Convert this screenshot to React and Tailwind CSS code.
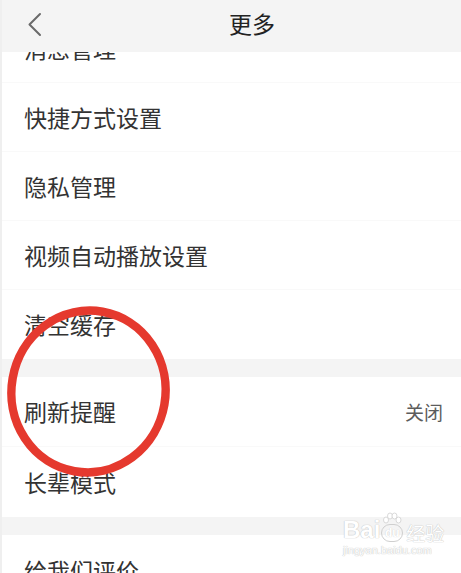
import React from "react";

const font = { fontFamily: '"Noto Sans CJK SC", "Noto Sans", sans-serif' };

function Row({ label, right, h = "h-[69px]", border = true }) {
  return (
    <div className={`${h} flex items-center justify-between pl-[22px] pr-[18px] ${border ? "border-b border-[#f9f9f9]" : ""}`}>
      <span className="text-[23px] leading-none text-[#333333]">{label}</span>
      {right && <span className="text-[19px] leading-none text-[#5c5c5c]">{right}</span>}
    </div>
  );
}

export default function App() {
  return (
    <div className="relative w-[461px] h-[573px] overflow-hidden bg-white border-l-2 border-[#efefef]" style={font}>
      <div className="relative z-10 h-[52px] flex items-center bg-[#f4f4f4]">
        <svg width="16" height="26" viewBox="0 0 16 26" className="ml-[25px] mt-[-2px]" fill="none">
          <path d="M13 2 L2.5 12.5 L13 23" stroke="#6a6a6a" strokeWidth="2" strokeLinecap="round" strokeLinejoin="round" />
        </svg>
        <span className="ml-[186px] mt-[-6px] text-[23px] leading-none text-[#222222]">更多</span>
      </div>
      <div className="h-[521px] overflow-hidden">
        <div className="-mt-[38px]">
          <Row label="消息管理" />
          <Row label="快捷方式设置" />
          <Row label="隐私管理" />
          <Row label="视频自动播放设置" />
          <Row label="清空缓存" border={false} />
          <div className="h-[18px] bg-[#f4f4f4]" />
          <Row label="刷新提醒" right="关闭" h="h-[70px]" />
          <Row label="长辈模式" h="h-[70px]" border={false} />
          <div className="h-[18px] bg-[#f4f4f4]" />
          <Row label="给我们评价" h="h-[70px]" border={false} />
        </div>
      </div>

      <svg className="absolute left-0 top-0 pointer-events-none" width="461" height="573" viewBox="0 0 461 573">
        <ellipse cx="86.5" cy="391.5" rx="77" ry="81" transform="rotate(10 86.5 391.5)" fill="none" stroke="#e5392e" strokeWidth="8.5" />
      </svg>

      <div className="absolute left-[341px] top-[512px] flex flex-col items-start pointer-events-none">
        <div className="flex items-end leading-none">
          <span className="text-[24px] font-bold text-white [text-shadow:0_0_1px_#c4c4c4,0_0_1px_#c4c4c4]" style={{ fontFamily: '"Liberation Sans", sans-serif' }}>Bai</span>
          <div className="ml-[1px] flex flex-col items-center">
            <svg width="20" height="12" viewBox="0 0 20 12" fill="white" stroke="#cfcfcf" strokeWidth="0.8">
              <ellipse cx="4" cy="8" rx="2.5" ry="3" />
              <ellipse cx="8" cy="4" rx="2.5" ry="3" />
              <ellipse cx="12.5" cy="4" rx="2.5" ry="3" />
              <ellipse cx="16.5" cy="8" rx="2.5" ry="3" />
            </svg>
            <span className="flex h-[18px] w-[22px] items-center justify-center rounded-full border border-[#cfcfcf] text-[12px] font-bold text-white [text-shadow:0_0_1px_#c4c4c4]" style={{ fontFamily: '"Liberation Sans", sans-serif' }}>du</span>
          </div>
          <span className="ml-[3px] text-[19px] text-white [text-shadow:0_0_1px_#c4c4c4,0_0_1px_#c4c4c4]">经验</span>
        </div>
        <span className="mt-[3px] text-[11px] leading-none text-white [text-shadow:0_0_1px_#c4c4c4,0_0_1px_#c4c4c4]" style={{ fontFamily: '"Liberation Sans", sans-serif' }}>jingyan.baidu.com</span>
      </div>
    </div>
  );
}
